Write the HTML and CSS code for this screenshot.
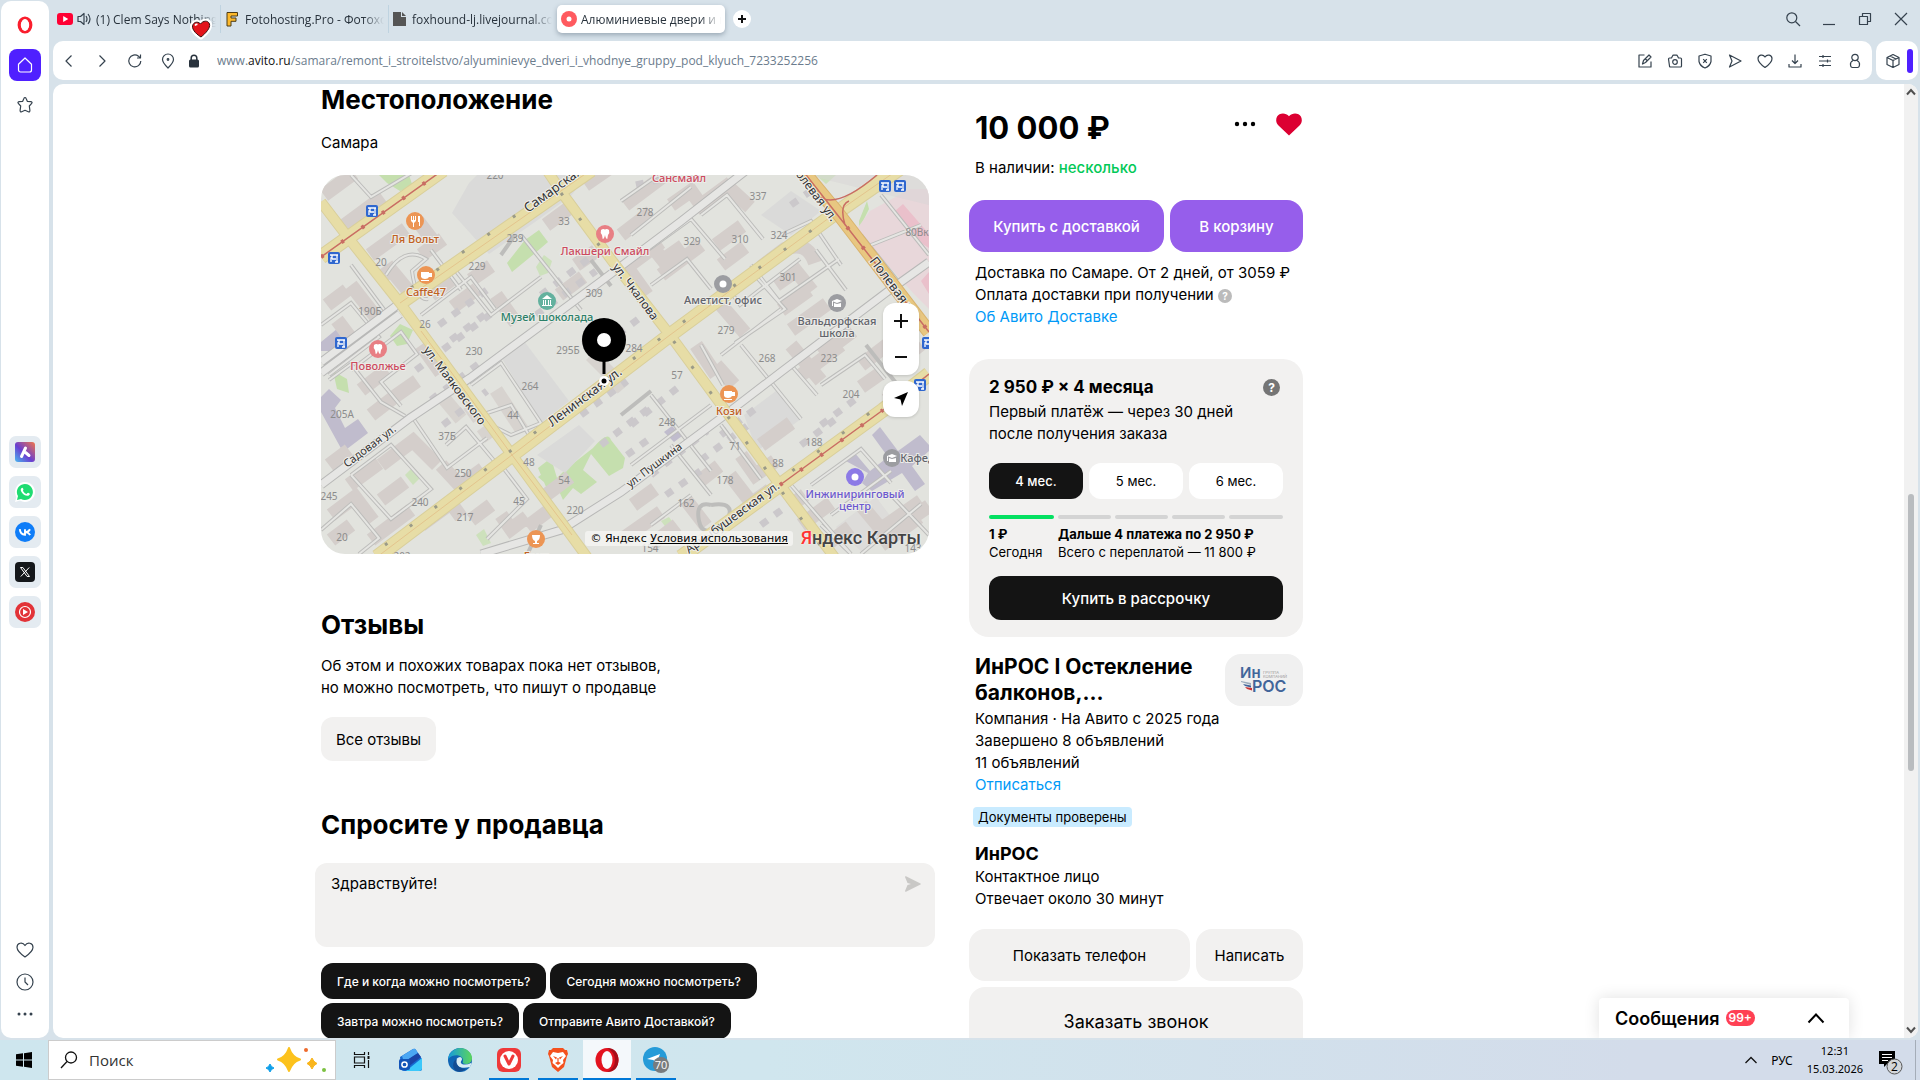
FILE: index.html
```html
<!DOCTYPE html>
<html lang="ru">
<head>
<meta charset="utf-8">
<title>Алюминиевые двери и входные группы</title>
<link rel="stylesheet" href="styles.css">
</head>
<body>
<div class="browser">
  <nav class="sidebar" aria-label="Боковая панель">
    <button class="side-btn opera" aria-label="Opera"><svg width="18" height="18" viewBox="0 0 18 18"><ellipse cx="9" cy="9" rx="5.8" ry="7" fill="none" stroke="#fa1e2d" stroke-width="3.2"/><ellipse cx="9" cy="9" rx="3.8" ry="6" fill="#fff"/></svg></button>
    <button class="side-btn home" aria-label="Главная"><svg class="ic" width="18" height="18" viewBox="0 0 18 18"><path d="M2.5 8.2 9 2l6.500 6.200V14a2 2 0 0 1-2 2h-9a2 2 0 0 1-2-2z"/></svg></button>
    <button class="side-btn star" aria-label="Закладки"><svg class="ic" width="18" height="18" viewBox="0 0 18 18"><path d="M9 1.500q.7 0 1 .8l1.300 3 3.600.4q2 .4.6 1.900l-2.200 2.400.6 4.400q.1 2-1.600 1.300L9 14.300l-3.300 1.400q-1.700.7-1.600-1.300l.6-4.400-2.200-2.400q-1.400-1.500.6-1.900l3.600-.4 1.300-3q.3-.8 1-.8z"/></svg></button>
    <div class="apps">
      <button class="app" aria-label="Aria"><svg width="20" height="20" viewBox="0 0 20 20"><defs><linearGradient id="ar" x1="0" y1="1" x2="1" y2="0"><stop offset="0" stop-color="#48b8f0"/><stop offset=".45" stop-color="#6a3fd0"/><stop offset="1" stop-color="#f2764a"/></linearGradient></defs><rect width="20" height="20" rx="3" fill="url(#ar)"/><path d="M6.500 14.500 10.500 6M10.500 10.500l3.500 3" stroke="#fff" stroke-width="3" stroke-linecap="round"/></svg></button>
      <button class="app" aria-label="WhatsApp"><svg width="20" height="20" viewBox="0 0 20 20"><path d="M0 20 1.400 15A10 10 0 1 1 5 18.600z" fill="#fff"/><path d="M2 18l1-3.900A8 8 0 1 1 6 17z" fill="#1fdc72"/><path d="M6.200 6.500q1.200-1.700 2 .2c.8 1.400-.8 1.500 0 2.600q1.300 2 3 2.600c.9.300 1.200-1.700 2.400-.9 2.100 1 1.300 1.500.2 2.400-1.800 1.200-5.200-.3-6.800-2.600-1.200-1.600-1.700-3.300-.8-4.300z" fill="#fff"/></svg></button>
      <button class="app" aria-label="ВКонтакте"><svg width="20" height="20" viewBox="0 0 20 20"><circle cx="10" cy="10" r="10" fill="#0f7df8"/><path d="M4.800 7.200q.5 5.300 5.200 5.600V7.200M15 7.200q-1.500 2.800-4.600 2.900 3.200.2 4.800 2.800" fill="none" stroke="#fff" stroke-width="1.900"/></svg></button>
      <button class="app" aria-label="X"><svg width="20" height="20" viewBox="0 0 20 20"><rect width="20" height="20" rx="4" fill="#14171a"/><path d="M5.500 5.500h2.400l6.600 9h-2.400zM14.200 5.500l-8.400 9" fill="none" stroke="#fff" stroke-width="1"/></svg></button>
      <button class="app" aria-label="YouTube Music"><svg width="20" height="20" viewBox="0 0 20 20"><circle cx="10" cy="10" r="10" fill="#e23338"/><circle cx="10" cy="10" r="5.500" fill="none" stroke="#fff" stroke-width="1.200"/><path d="M8 7v6l5-3z" fill="#fff"/></svg></button>
    </div>
    <div class="side-bottom">
      <button class="side-btn" aria-label="Избранное"><svg class="ic" width="18" height="18" viewBox="0 0 18 18"><path d="M9 16Q1 10.500 1 6.300C1 2 6.500.5 9 4.500 11.500.5 17 2 17 6.300 17 10.500 9 16 9 16z"/></svg></button>
      <button class="side-btn" aria-label="История"><svg class="ic" width="18" height="18" viewBox="0 0 18 18"><circle cx="9" cy="9" r="8"/><path d="M9 4.500V9l3 3"/></svg></button>
      <button class="side-btn" aria-label="Ещё"><svg width="18" height="18" viewBox="0 0 18 18" fill="#35424e"><circle cx="3" cy="9" r="1.500"/><circle cx="9" cy="9" r="1.500"/><circle cx="15" cy="9" r="1.500"/></svg></button>
    </div>
  </nav>

  <div class="window">
    <header class="tabs">
      <div class="tab"><svg width="16" height="12" viewBox="0 0 16 12"><rect width="16" height="12" rx="3" fill="#ff0033"/><path d="M6.200 3v6l5-3z" fill="#fff"/></svg><svg class="ic" width="15" height="14" viewBox="0 0 15 14"><path d="M1 4.500h2.500L7 1.500v11L3.500 9.500H1zM9 4q2 3 0 6M11 2q4 5 0 10"/></svg><span class="tab-text">(1) Clem Says Nothing</span><svg class="sticker" width="24" height="22" viewBox="0 0 24 22"><path d="M12 19C6 15.500 2 10 4 6.500 6 3 10 4 11.500 6 14 2.500 19 2 20.500 6 21.500 10 17 15 12 19z" fill="#e3141b" stroke="#fff" stroke-width="5" stroke-linejoin="round"/><path d="M12 19C6 15.500 2 10 4 6.500 6 3 10 4 11.500 6 14 2.500 19 2 20.500 6 21.500 10 17 15 12 19z" fill="#e3141b" stroke="#3a1010" stroke-width="1"/><path d="M6 7.500q1-1.500 2.500-1" stroke="#fff" stroke-width="1.500" fill="none"/></svg></div>
      <div class="tab"><svg width="14" height="16" viewBox="0 0 14 16"><path d="M2 1.500h10.500v3.500H6v2h5v3.300H6v4.700H2z" fill="#fdb92c" stroke="#4d3c17" stroke-width="1"/></svg><span class="tab-text">Fotohosting.Pro - Фотохост</span></div>
      <div class="tab"><svg width="13" height="14" viewBox="0 0 13 14"><path d="M0 0h8v5h5v9H0zM9 0l4 4H9z" fill="#555"/></svg><span class="tab-text">foxhound-lj.livejournal.com</span></div>
      <div class="tab active"><svg width="16" height="16" viewBox="0 0 16 16"><circle cx="8" cy="8" r="8" fill="#ff5a5f"/><circle cx="8" cy="8" r="2.500" fill="#fff"/></svg><span class="tab-text">Алюминиевые двери и вх</span></div>
      <button class="plus" aria-label="Новая вкладка"><svg width="18" height="18" viewBox="0 0 18 18"><path d="M9 5v8M5 9h8" stroke="#111" stroke-width="2"/></svg></button>
      <div class="win-controls">
        <button aria-label="Поиск вкладок"><svg class="ic" width="16" height="16" viewBox="0 0 16 16"><circle cx="6.800" cy="6.800" r="5"/><path d="m10.500 10.500 4.500 4.500"/></svg></button>
        <button aria-label="Свернуть"><svg class="ic" width="16" height="16" viewBox="0 0 16 16"><path d="M2 13.500h12"/></svg></button>
        <button aria-label="Восстановить"><svg class="ic" width="16" height="16" viewBox="0 0 16 16"><path d="M2.500 5.500h8v8h-8zM5.500 5.500v-3h8v8h-3"/></svg></button>
        <button aria-label="Закрыть"><svg class="ic" width="16" height="16" viewBox="0 0 16 16"><path d="m2 2 12 12M14 2 2 14"/></svg></button>
      </div>
    </header>

    <div class="toolbar">
      <div class="address">
        <button aria-label="Назад"><svg class="ic" width="16" height="16" viewBox="0 0 16 16"><path d="M10.500 2.500 5 8l5.500 5.500"/></svg></button>
        <button aria-label="Вперёд"><svg class="ic" width="16" height="16" viewBox="0 0 16 16"><path d="M5.500 2.500 11 8l-5.500 5.500"/></svg></button>
        <button aria-label="Обновить"><svg class="ic" width="16" height="16" viewBox="0 0 16 16"><path d="M13.800 8A6 6 0 1 1 11.500 3.200L13 4.800M13.500 1.500V5H10"/></svg></button>
        <button aria-label="Местоположение"><svg class="ic" width="16" height="16" viewBox="0 0 16 16"><path d="M8 15Q2.500 9.500 2.500 6.500a5.500 5.500 0 0 1 11 0Q13.500 9.500 8 15z"/><circle cx="8" cy="6.500" r=".8"/></svg></button>
        <svg class="lock" width="12" height="14" viewBox="0 0 12 14"><path d="M3.200 7V4a2.800 2.800 0 0 1 5.600 0v3" fill="none" stroke="#28323c" stroke-width="1.500"/><rect x="1" y="5.500" width="10" height="8" rx="1.500" fill="#28323c"/></svg>
        <span class="url">www.<b>avito.ru</b>/samara/remont_i_stroitelstvo/alyuminievye_dveri_i_vhodnye_gruppy_pod_klyuch_7233252256</span>
        <div class="tools">
          <button aria-label="Заметка"><svg class="ic" width="16" height="16" viewBox="0 0 16 16"><path d="M7.500 2H2v12h12V8.500M5.500 11l1-3.500L12 2l2 2-5.500 5.500zM8.500 6l2 2"/></svg></button>
          <button aria-label="Снимок"><svg class="ic" width="16" height="16" viewBox="0 0 16 16"><path d="M1.500 6q0-1 1-1h2l1-2q.3-.8 1-.8h3q.7 0 1 .8l1 2h2q1 0 1 1v7q0 1-1 1h-10q-1 0-1-1z"/><circle cx="8" cy="9" r="2.300"/></svg></button>
          <button aria-label="Защита"><svg class="ic" width="16" height="16" viewBox="0 0 16 16"><path d="M8 1.200 14 3v5.500Q13 13 8 15 3 13 2 8.500V3zM6.200 6.200l3.600 3.600M9.800 6.200 6.200 9.800"/></svg></button>
          <button aria-label="Отправить"><svg class="ic" width="16" height="16" viewBox="0 0 16 16"><path d="M2.500 2 14 8 2.500 14 5 8z"/></svg></button>
          <button aria-label="В избранное"><svg class="ic" width="16" height="16" viewBox="0 0 16 16"><path d="M8 14.500Q1 9.500 1 5.700C1 1.800 6 .8 8 4c2-3.200 7-2.200 7 1.700 0 3.800-7 8.800-7 8.800z"/></svg></button>
          <button aria-label="Загрузки"><svg class="ic" width="16" height="16" viewBox="0 0 16 16"><path d="M8 1.500v9M5 7.500l3 3 3-3M2 11v3h12v-3"/></svg></button>
          <button aria-label="Настройки"><svg class="ic" width="16" height="16" viewBox="0 0 16 16"><path d="M2 3.500h12M2 8h12M2 12.500h12M6 2v3M10.500 6.500v3M6 11v3"/></svg></button>
          <button aria-label="Профиль"><svg class="ic" width="16" height="16" viewBox="0 0 16 16"><circle cx="8" cy="4.500" r="3.200"/><path d="M6 7.500Q3 9 3.500 12q.2 2.500 2 2.500h5q1.800 0 2-2.500.5-3-2.500-4.500"/></svg></button>
        </div>
      </div>
      <div class="ext">
        <button aria-label="Расширения"><svg class="ic" width="16" height="16" viewBox="0 0 16 16"><path d="m8 1.500 6 3v7l-6 3-6-3v-7zM2 4.500l6 3 6-3M8 7.500v7M5 3l6 3"/></svg></button>
        <span class="ext-bar"></span>
      </div>
    </div>

    <div class="page">
      <main class="content">
        <section class="left">
          <h2 class="h-top">Местоположение</h2>
          <p class="city">Самара</p>
          <div class="map">
            <svg class="map-art" viewBox="0 0 608 379" preserveAspectRatio="xMidYMid slice">
              <rect width="608" height="379" fill="#e2e3de"/>
              <!-- parks and large plots -->
              <g fill="#c5dfae">
                <path d="M186 88l18-23 14-10 9 12-14 12-22 18zM58 0l30 0 4 12-13 4-13-8zM69 161l10-12 13 6-6 14-10 2zM12 196l14 8 2 14-12-4zM217 293l13-10 6 20 8-8 28-22q15-18 18-8l14 18-2 10-14 8-18-22-8 16 14 12-16 12-8-6-10 12-8-18-6 12zM538 54l10-20-2-8-8 20zM217 302l8-6 12 10-6 8z"/>
                <path d="M215 92l8-12 8 6-4 12-8 3zM84 300l8-8 8 10-8 8zM155 360l8-6 7 14-8 3zM340 346l8-4 14 20-12-3zM495 0h20l-10 9z" opacity=".7"/>
              </g>
              <path d="M131 38 148 8l8-8h110l-16 21-36 26-46 32zM180 182l23-16 45 60-28 22zM423 240l32-24 25 28-44 32zM440 40l30-24 30 20-30 24zM216 280l42-30 16 16-30 32z" fill="#dadad9"/>
              <path d="M535 55l14-19 40-22 19 0v120l-14-14-40-44z" fill="#e8d7da"/>
              <path d="M574 36l8-7 26 30v14l-8-5zM600 106l8-9v22z" fill="#eac0cb"/>
              <g fill="#c0bccd">
                <path d="M0 222l8-8 12 11-6 8 10 20 13-9 10 14-25 19-22-40zM0 167l22-18 8 12-20 15H0zM523 285l10-8 16 19 18-14-16-22 8-8 18 24 22-16 9 10v6l-17 15 13 18-10 7-13-18-30 18-10-8 6-10z"/>
                <path d="M343 257l8-6 10 10-8 6z"/>
              </g>
              <path d="M486 0h122v30M515 352l40-30 18 24-30 33" fill="#d8d6d6" opacity=".5"/>
              <!-- buildings along the blocks -->
              <g fill="none" stroke="#d4cecb" stroke-width="14">
                <path d="M3 20l30-22M20 53l42-31M49 80l36-26M56 105l14-10 20 24M100 80l22-16M96 45l20 26M30 110l28 36M6 130l20-15M16 145l24 32M40 215l26-20M50 240l26-20 20-14M100 170l20 28M132 132l24-18M150 105l20-14M110 120l20-15M175 120l20 28M225 50l30-22M255 90l20-14M238 120l24-18M264 10l26-18M300 60l30-23M304 30l40-30M330 70l12 15 20-14M350 30l20-14 10 14 30-22M395 70l26-19M405 10l24 22M400 90l24-18M326 120l-20-28 34-25M340 100l40-30M375 170l20 30M395 190l18 20M400 130l24 28M440 92l24-18q22-9 30 14M455 110l20-14 16 20M460 135l28-20M470 155l36-26M470 170l30 36M480 200l40-30M500 180l32-24M540 190l26-20M580 185l20-16M420 280l14 20 20-14M440 270l30-22M540 212l20-14M565 225l16-12"/>
                <path d="M8 290l20-15M28 310l30-22M60 290l32-24 24 24M10 340l24-18 18 24M30 350l-20 15M50 365l40-30M60 325l24-18M120 290l24 26M140 310l22-16M100 350l30-22 10 14M150 345l20-15M180 340l10 14 16-12M206 352l24-18M225 320l24-18M300 365l40-28M312 330l22-16M330 370l26-20M365 325l20 26M380 305l18-14M409 300l20 26M435 325l14-10M480 350l30-22M505 370l24-18M540 330l20 24 40-28M560 370l38-28M595 340l13-9M470 330l14-10"/>
                <path d="M120 220l20 24M148 230l10 14M160 262l14-10M175 215l26 40M270 180l24 24M264 172l20-14M290 200l12 14" opacity=".8"/>
              </g>
              <g fill="none" stroke="#cbc8cb" stroke-width="7" stroke-dasharray="8 9">
                <path d="M118 150l52-38M130 165l40-30M95 195l80-60M270 180l50-38M110 225l50-38M122 250l44-34M260 240l46-34M280 270l52-40M310 250l50-40M380 285l46-34M330 300l56-44M400 260l34-26M220 120l50-38M215 140l60-44M306 280l22-16M345 320l40-28M480 270l40-30M500 250l40-30M375 140l40-32M440 350l30-22M315 10l60-14M470 30l28-20"/>
              </g>
              <!-- yards and lanes -->
              <g fill="none" stroke="#bdbdbb" stroke-width="4"><path id="lanes" d="M30 0l20 22 44-26M30 90l40 54M65 100q18-30 40-16l-14 12q4 30 16 28M0 150l30-22 28 34-50 38M8 205l22-16 30 38 24 14M30 195l50-38 16 22-36 28 20 24M100 140l50-38 24 32M130 90l40 50 50-38M110 75l30 40M150 210l30-22 40 60-30 12-20-10M180 80l14-20M200 60l60 75M270 85l20 26M160 240l30-10 18 30M0 355l30-26 28 34-20 16M30 300l40-30 40 44-40 30-40-44M92 243l34 50 40-30M140 320l40-30 26 34-40 40M206 380l14-30M125 270l20-18 30 36M310 60l60-48M320 80l50-36 34 40M300 26l40-28M380 40l26-20 36 44M330 110l36-26 24 30M370 140l60-44 34 38-50 34M400 180l60-46M430 90l28 36 60-42M460 60l30-14 30 44M495 75l30 40M420 170l60 74M380 170l22 40M405 110l14 20 60-46M470 190l26 30M500 210l44-30 20 24M545 170l30 38M300 240l30-24M310 290l80-60M330 220l60 76M350 270l40 50M400 250l40 54M390 330q-16-4-12 16t28 0q10-20-16-16M330 350l40-30M480 290l50-36M490 310l50-36 30 34M510 340l60-44M500 350l30 29M540 379l60-50M570 320l38 40M470 310l60 69M540 60l40 50M560 20l48 60M600 50l-50 20"/></g>
              <g fill="none" stroke="#e5e5e2" stroke-width="2"><path d="M30 0l20 22 44-26M30 90l40 54M0 150l30-22 28 34-50 38M30 195l50-38 16 22-36 28 20 24M100 140l50-38 24 32M130 90l40 50 50-38M150 210l30-22 40 60-30 12-20-10M200 60l60 75M0 355l30-26 28 34-20 16M30 300l40-30 40 44-40 30-40-44M92 243l34 50 40-30M140 320l40-30 26 34-40 40M310 60l60-48M320 80l50-36 34 40M380 40l26-20 36 44M330 110l36-26 24 30M370 140l60-44 34 38-50 34M400 180l60-46M430 90l28 36 60-42M420 170l60 74M500 210l44-30 20 24M330 220l60 76M400 250l40 54M490 310l50-36 30 34M510 340l60-44M540 379l60-50M65 100q18-30 40-16l-14 12q4 30 16 28M8 205l22-16 30 38 24 14M110 75l30 40M160 240l30-10 18 30M125 270l20-18 30 36M300 26l40-28M460 60l30-14 30 44M495 75l30 40M380 170l22 40M405 110l14 20 60-46M470 190l26 30M310 290l80-60M350 270l40 50M330 350l40-30M480 290l50-36M500 350l30 29M570 320l38 40M470 310l60 69M540 60l40 50M560 20l48 60M600 50l-50 20"/></g>
              <g fill="none" stroke="#b8b8b7" stroke-width="9"><path d="M0 187l79-59M0 198l79-59M0 310l89-67 60-40 130-96 40-30 40-30 90-70M160 379l80-24 60-38 100-74 60-46 106-80 42-30"/></g>
              <g fill="none" stroke="#e6e6e4" stroke-width="7"><path d="M0 187l79-59M0 198l79-59M0 310l89-67 60-40 130-96 40-30 40-30 90-70M160 379l80-24 60-38 100-74 60-46 106-80 42-30"/></g>
              <!-- main streets -->
              <g fill="none" stroke="#d9cf9b">
                <path d="M0 82 122-5M79 128 270-5M56 382l135-102 158-120 163-120 66-46M360 382l99-72 103-75 46-36" stroke-width="15"/>
                <path d="M0 27l29 38 50 63 112 152 75 102M227-3l17 25 48 65 57 73 110 150 55 73" stroke-width="11"/>
              </g>
              <g fill="none" stroke="#e7dda6">
                <path d="M0 82 122-5M79 128 270-5M56 382l135-102 158-120 163-120 66-46M360 382l99-72 103-75 46-36" stroke-width="13"/>
                <path d="M0 27l29 38 50 63 112 152 75 102M227-3l17 25 48 65 57 73 110 150 55 73" stroke-width="9"/>
              </g>
              <path d="M56 382l135-102 158-120 163-120 66-46M79 128 270-5M100 156l91 124 60 80" fill="none" stroke="#e3c48d" stroke-width="1"/>
              <path d="M482-4l34 41 92 120" fill="none" stroke="#d9b46e" stroke-width="14"/><path d="M482-4l34 41 92 120" fill="none" stroke="#e8c781" stroke-width="12"/>
              <g fill="none" stroke="#c96d63" stroke-width="1.500"><path d="M0 82 122-5M482-4l44 56 82 105M459 310l103-75 46-36M496 20q18 16 60-20M524 50q-6-20 4-24"/><path d="M0 82 122-5M526 52l82 105M459 310l103-75" stroke-width="4" stroke-dasharray="3 22"/></g>
              <g fill="none" stroke="#9b9b88" stroke-width="3" stroke-dasharray="3 28"><path d="M64 370l120-90 160-120 168-120M90 113l170-118M240 18l54 74 60 76 105 146 50 70M372 370l190-142"/></g>

              <!-- house numbers -->
              <g class="map-num">
                <text x="174" y="4">220</text><text x="60" y="91">20</text><text x="194" y="67">239</text><text x="156" y="95">229</text><text x="243" y="50">33</text><text x="49" y="140">190Б</text><text x="104" y="153">26</text><text x="153" y="180">230</text><text x="273" y="122">309</text><text x="247" y="179">295Б</text><text x="313" y="177">284</text><text x="209" y="215">264</text><text x="21" y="243">205А</text><text x="192" y="244">44</text><text x="126" y="265">37Б</text><text x="142" y="302">250</text><text x="208" y="291">48</text><text x="243" y="309">54</text><text x="8" y="325">245</text><text x="99" y="331">240</text><text x="198" y="330">45</text><text x="254" y="339">220</text><text x="144" y="346">217</text><text x="21" y="366">20</text><text x="81" y="385">202</text>
                <text x="324" y="41">278</text><text x="437" y="25">337</text><text x="371" y="70">329</text><text x="419" y="68">310</text><text x="458" y="64">324</text><text x="467" y="106">301</text><text x="596" y="61">80Вк</text><text x="405" y="159">279</text><text x="446" y="187">268</text><text x="508" y="187">223</text><text x="356" y="204">57</text><text x="530" y="223">204</text><text x="346" y="251">248</text><text x="414" y="275">71</text><text x="493" y="271">188</text><text x="457" y="292">88</text><text x="404" y="309">178</text><text x="365" y="332">162</text><text x="329" y="377">154</text><text x="592" y="377">143</text>
              </g>
              <!-- street names -->
              <g class="map-street">
                <text transform="translate(207 38) rotate(-36)">Самарская ул.</text>
                <text class="md" transform="translate(102 175) rotate(53)">ул. Маяковского</text>
                <text class="md" transform="translate(291 92) rotate(53)">ул. Чкалова</text>
                <text transform="translate(231 252) rotate(-37)">Ленинская ул.</text>
                <text class="sm" transform="translate(26 293) rotate(-37)">Садовая ул.</text>
                <text class="sm" transform="translate(309 313) rotate(-37)">ул. Пушкина</text>
                <text class="md" transform="translate(368 379) rotate(-36)">Арцыбушевская ул.</text>
                <text class="md" transform="translate(469-8) rotate(53)">Полевая ул.</text>
                <text transform="translate(548 86) rotate(53)">Полевая ул.</text>
              </g>
              <!-- tram stops -->
              <g fill="#2f67cf"><rect x="45" y="30" width="12" height="12" rx="2"/><rect x="7" y="77" width="12" height="12" rx="2"/><rect x="14" y="162" width="12" height="12" rx="2"/><rect x="558" y="5" width="12" height="12" rx="2"/><rect x="573" y="5" width="12" height="12" rx="2"/><rect x="601" y="162" width="12" height="12" rx="2"/><rect x="593" y="204" width="12" height="12" rx="2"/></g>
              <g fill="none" stroke="#fff" stroke-width="1.300"><path id="tram" d="M47 33h8M49 33v3h-1v4M49 37h4M54 33v7M52 40h3"/><use href="#tram" x="-38" y="47"/><use href="#tram" x="-31" y="132"/><use href="#tram" x="513" y="-25"/><use href="#tram" x="528" y="-25"/><use href="#tram" x="556" y="132"/><use href="#tram" x="548" y="174"/></g>
              <!-- places -->
              <g fill="#ec9554"><circle cx="94" cy="46" r="9"/><circle cx="105" cy="100" r="9"/><circle cx="215" cy="364" r="9"/><circle cx="408" cy="219" r="9"/></g>
              <g fill="#e87f84"><circle cx="284" cy="59" r="9"/><circle cx="57" cy="174" r="9"/></g>
              <circle cx="226" cy="126" r="9" fill="#63b19e"/>
              <g fill="#9c9da1"><circle cx="402" cy="109" r="9"/><circle cx="516" cy="128" r="9"/><circle cx="571" cy="283" r="9"/></g>
              <circle cx="534" cy="302" r="9" fill="#8c7ae6"/>
              <g fill="#fff"><circle cx="402" cy="109" r="3.500"/><circle cx="534" cy="302" r="3.500"/><path id="tooth" d="M280 55q2-1.500 4-.5 2-1 4 .5 1 3-1 5l-.7 4q-1.500 0-2.300-4-.8 4-2.300 4l-.7-4q-2-2-1-5z"/><use href="#tooth" x="-227" y="115"/><path id="cup" d="M100 97h8v5q-1 2-4 2t-4-2zM100 105h8v1h-8zM108 98h3v4h-3z"/><use href="#cup" x="303" y="119"/><path d="M211 360h8q0 5-3 6v2h2v1h-6v-1h2v-2q-3-1-3-6zM90 41h1v4h1v-4h1v4h1v-4h1v5l-2 2v4h-1v-4l-2-2zM97 41h2v10h-1v-4h-1zM221 124l5-4 5 4zM222 125h1v5h-1zM224 125h1v5h-1zM227 125h1v5h-1zM229 125h1v5h-1zM221 130h10v1h-10z"/><path id="cap" d="M511 126l5-2 5 2-5 2zM513 128l3 1 4-1v4h-7zM511 126h1v5h-1z"/><use href="#cap" x="55" y="155"/></g>
              <g class="map-place">
                <g fill="#c06022"><text x="94" y="68">Ля Вольт</text><text x="105" y="121">Caffe47</text><text x="215" y="385">Грит</text><text x="408" y="240">Кози</text></g>
                <g fill="#cc4a5e"><text x="284" y="80">Лакшери Смайл</text><text x="57" y="195">Поволжье</text><text x="358" y="7">Сансмайл</text></g>
                <text x="226" y="146" fill="#2b8069">Музей шоколада</text>
                <g fill="#62646c"><text x="402" y="129">Аметист, офис</text><text x="516" y="150">Вальдорфская</text><text x="516" y="162">школа</text><text x="603" y="287">Кафедра</text></g>
                <g fill="#6b58cf"><text x="534" y="323">Инжиниринговый</text><text x="534" y="335">центр</text></g>
              </g>
              <!-- item pin -->
              <circle cx="283" cy="206" r="5" fill="#fff"/><circle cx="283" cy="206" r="2.500"/><circle cx="283" cy="165" r="22"/><path d="M281.500 185h3v14h-3z"/><circle cx="283" cy="165" r="7" fill="#fff"/>
            </svg>
            <div class="map-controls">
              <div class="zoom"><button aria-label="Приблизить"><svg width="16" height="16" viewBox="0 0 16 16"><path d="M8 1v14M1 8h14" stroke="#111" stroke-width="2"/></svg></button><button aria-label="Отдалить"><svg width="16" height="16" viewBox="0 0 16 16"><path d="M2 8h12" stroke="#111" stroke-width="2"/></svg></button></div>
              <button class="locate" aria-label="Моё местоположение"><svg width="16" height="16" viewBox="0 0 16 16"><path d="M15 1 9 15 7.500 8.500 1 7z"/></svg></button>
            </div>
            <div class="map-foot"><span class="copy">© Яндекс <a href="#terms">Условия использования</a></span><span class="ya"><i>Я</i>ндекс Карты</span></div>
          </div>

          <h2 class="h-reviews">Отзывы</h2>
          <p class="text">Об этом и похожих товарах пока нет отзывов,<br>но можно посмотреть, что пишут о продавце</p>
          <button class="btn-soft all">Все отзывы</button>

          <h2 class="h-ask">Спросите у продавца</h2>
          <div class="ask"><textarea aria-label="Сообщение продавцу">Здравствуйте!</textarea><button aria-label="Отправить"><svg width="16" height="16" viewBox="0 0 16 16"><path d="M0 1q0-1 1-.7L15.500 7.500q.7.500 0 1L1 15.700q-1 .3-1-.7L2.500 9 6 8 2.500 7z" fill="#c9c8c6"/></svg></button></div>
          <div class="chips"><button>Где и когда можно посмотреть?</button><button>Сегодня можно посмотреть?</button><button>Завтра можно посмотреть?</button><button>Отправите Авито Доставкой?</button></div>
        </section>

        <aside class="right">
          <div class="price-row"><span class="price">10 000 ₽</span><button aria-label="Ещё"><svg width="22" height="8" viewBox="0 0 22 8"><circle cx="3" cy="4" r="2.200"/><circle cx="11" cy="4" r="2.200"/><circle cx="19" cy="4" r="2.200"/></svg></button><button aria-label="В избранном"><svg width="26" height="23" viewBox="0 0 26 23"><path d="M13 22.500 2.500 12.500C-1.500 8.500.2 3 3.500 1.300 6.500-.3 10.500.3 13 3.300c2.500-3 6.500-3.600 9.500-2C25.800 3 27.500 8.500 23.500 12.500z" fill="#dc0032"/></svg></button></div>
          <p class="stock">В наличии: <span>несколько</span></p>
          <div class="buy"><button>Купить с доставкой</button><button>В корзину</button></div>
          <p class="text pad">Доставка по Самаре. От 2 дней, от 3059 ₽<br>Оплата доставки при получении <span class="q small">?</span><br><a href="#delivery">Об Авито Доставке</a></p>

          <section class="loan">
            <div class="loan-head"><h3>2 950 ₽ × 4 месяца</h3><button class="q" aria-label="Подробнее">?</button></div>
            <p class="text">Первый платёж — через 30 дней<br>после получения заказа</p>
            <div class="terms"><button class="on">4 мес.</button><button>5 мес.</button><button>6 мес.</button></div>
            <div class="bars"><i class="paid"></i><i></i><i></i><i></i><i></i></div>
            <div class="plan"><p><b>1 ₽</b><br>Сегодня</p><p><b>Дальше 4 платежа по 2 950 ₽</b><br>Всего с переплатой — 11 800 ₽</p></div>
            <button class="loan-buy">Купить в рассрочку</button>
          </section>

          <section class="seller">
            <div><h3>ИнРОС I Остекление балконов,…</h3></div>
            <div class="logo"><svg width="48" height="28" viewBox="0 0 48 28"><g font-family="Inter, sans-serif" font-weight="600" fill="#41659a"><text x="0" y="12" font-size="15">Ин</text><text x="12" y="26" font-size="16">РОС</text></g><g font-family="Inter, sans-serif" font-size="4" fill="#999"><text x="23" y="8">ГРУППА</text><text x="23" y="12">КОМПАНИЙ</text></g><path d="M1 15l10 2v2L1 16z" fill="#9ab"/><path d="M3 18l8 1.500v2L5 20z" fill="#41659a"/><path d="M5 21l7 1v2.500L7 23z" fill="#c33"/></svg></div>
          </section>
          <p class="text pad">Компания · На Авито с 2025 года<br>Завершено 8 объявлений<br>11 объявлений<br><a href="#unsubscribe">Отписаться</a></p>
          <span class="badge">Документы проверены</span>
          <h4>ИнРОС</h4>
          <p class="text pad">Контактное лицо<br>Отвечает около 30 минут</p>
          <div class="contact"><button class="btn-soft">Показать телефон</button><button class="btn-soft">Написать</button></div>
          <button class="btn-soft call">Заказать звонок</button>
        </aside>
      </main>

      <div class="scrollbar"><svg width="10" height="8" viewBox="0 0 10 8"><path d="M1 6.500 5 2l4 4.500" fill="none" stroke="#505050" stroke-width="2"/></svg><span class="thumb"></span><svg width="10" height="8" viewBox="0 0 10 8"><path d="M1 1.500 5 6l4-4.500" fill="none" stroke="#505050" stroke-width="2"/></svg></div>
      <button class="messages"><span>Сообщения</span><em>99+</em><svg width="18" height="12" viewBox="0 0 18 12"><path d="m1.500 10.500 7.500-8 7.500 8" fill="none" stroke="#000" stroke-width="2"/></svg></button>
    </div>
  </div>
</div>

<footer class="taskbar">
  <button class="start" aria-label="Пуск"><svg width="16" height="16" viewBox="0 0 16 16"><path d="M0 2.300 7 1.300v6.200H0zM8 1.200 16 0v7.500H8zM0 8.500h7v6.200l-7-1zM8 8.500h8V16l-8-1.200z"/></svg></button>
  <label class="search"><svg width="18" height="18" viewBox="0 0 18 18" fill="none" stroke="#111" stroke-width="1.300"><circle cx="11" cy="6.500" r="5.500"/><path d="M7 10.500 1 17"/></svg><input type="text" value="Поиск" aria-label="Поиск"><svg width="62" height="26" viewBox="0 0 62 26"><path d="M24 1q3 9 11 11.500-8 2.500-11 11.500-3-9-11-11.500Q21 10 24 1z" fill="#fcc21d" stroke="#fcc21d" stroke-width="2" stroke-linejoin="round"/><path d="M47 11q1.500 4 5 5.500-3.500 1.500-5 5.500-1.500-4-5-5.500 3.500-1.500 5-5.500z" fill="#f9b51c" stroke="#f9b51c" stroke-linejoin="round"/><path d="M5 17q1 3 4 4-3 1-4 4-1-3-4-4 3-1 4-4z" fill="#10a0ea" stroke="#10a0ea" stroke-linejoin="round"/><circle cx="41" cy="3" r="2" fill="#ee6a2c"/><circle cx="59" cy="23" r="2" fill="#7cc142"/></svg></label>
  <div class="tasks">
    <button aria-label="Представление задач"><svg width="18" height="18" viewBox="0 0 18 18" fill="none" stroke="#111" stroke-width="1.200"><path d="M1.500 1v2.500h10V1M1.500 6h10v6h-10zM1.500 17v-2.500h10V17M15.500 1v3M15.500 9v8"/><path d="M14.500 6.500h2" stroke-width="3"/></svg></button>
    <button aria-label="Outlook"><svg width="24" height="24" viewBox="0 0 24 24"><path d="m1 9 13-8q2-1 3 1l6 9v10q0 2-3 2H5q-3 0-3-3z" fill="#1769cf"/><path d="M3 8 14 1q2-1 3 1l2 3-14 9z" fill="#4ba7f3"/><path d="m5 14 14-9 3 4-13 10z" fill="#1b43a5"/><path d="m23 10-16 13h13q3 0 3-3z" fill="#3cc8fa"/><rect y="11" width="11" height="11" rx="2" fill="#1254b8"/><circle cx="5.500" cy="16.500" r="2.600" fill="none" stroke="#fff" stroke-width="1.500"/></svg></button>
    <button aria-label="Edge"><svg width="24" height="24" viewBox="0 0 24 24"><defs><linearGradient id="ed" x1="0" x2="1"><stop offset="0" stop-color="#169bdc"/><stop offset="1" stop-color="#5cd65c"/></linearGradient></defs><circle cx="12" cy="12" r="12" fill="#1065b4"/><path d="M0 11C1 4 7 0 12 0c7 0 12 5 12 10 0 4-3 6-6 6-3 0-4-1-3-3 1-5-8-9-15-2z" fill="url(#ed)"/><path d="M12 9q-5 1-4 6c1 4 6 6 14 4q2-4 1-4c-2 1-4 1.500-6 1.500-4 0-5-2-3.500-4 1-1.500.5-3-1.500-3.500z" fill="#d8edf5"/><path d="M9 11c-2 5 2 10 9 10q-5 4-10 2c-4-3-4-10 1-12z" fill="#124c93"/></svg></button>
    <button class="open" aria-label="Vivaldi"><svg width="24" height="24" viewBox="0 0 24 24"><rect width="24" height="24" rx="6" fill="#ef3939"/><circle cx="12" cy="12" r="9" fill="#fff"/><path d="m8 8 4 8 4-8" fill="none" stroke="#ef3939" stroke-width="3" stroke-linecap="round" stroke-linejoin="round"/></svg></button>
    <button class="open" aria-label="Brave"><svg width="22" height="24" viewBox="0 0 22 24"><path d="m6 0h10l2 2 2 0 1 4-1 2-3 11-6 5-6-5L2 8 1 6l1-4h2z" fill="#f4511e"/><path d="m6 4 5 1 5-1 3 4-3 4 .5 3-2.500 2-3 3-3-3-2.500-2L6 12 3 8z" fill="#fff"/><path d="m6 8 4 1.500-1 2zM16 8l-4 1.500 1 2zM10.400 10h1.200v4h-1.200zM8 15l3-1.500 3 1.500-3 2z" fill="#f4511e"/></svg></button>
    <button class="open current" aria-label="Opera"><svg width="24" height="24" viewBox="0 0 24 24"><ellipse cx="12" cy="12" rx="11.500" ry="12" fill="#e3131f"/><path d="M12 0q11 0 11.500 12Q23 24 12 24q8-4 8-12T12 0z" fill="#a70e19"/><ellipse cx="12" cy="12" rx="5.500" ry="9" fill="#fafcfd"/></svg></button>
    <button class="open" aria-label="Telegram"><svg width="26" height="26" viewBox="0 0 26 26"><circle cx="12" cy="12" r="12" fill="#259bd8"/><path d="m4 12 13-5-3 8-4-2z" fill="#fff"/><circle cx="18" cy="18" r="8" fill="#777b7e"/><text x="18" y="22" font-family="Open Sans, sans-serif" font-size="11" text-anchor="middle" fill="#fff">70</text></svg></button>
  </div>
  <div class="tray">
    <button aria-label="Скрытые значки"><svg width="12" height="8" viewBox="0 0 12 8"><path d="m.5 7 5.500-5.500L11.500 7" fill="none" stroke="#111" stroke-width="1.300"/></svg></button>
    <span>РУС</span>
    <time>12:31<br>15.03.2026</time>
    <button class="note" aria-label="Уведомления"><svg width="24" height="24" viewBox="0 0 24 24"><path d="M0 0h16v13H8l-3 3v-3H0z"/><path d="M3 3.500h10M3 6.500h10M3 9.500h6" stroke="#fff"/><circle cx="15.500" cy="15.500" r="7.500" fill="#d3d6da" stroke="#555" stroke-width="1"/><text x="15.500" y="20" font-family="Open Sans, sans-serif" font-size="12" text-anchor="middle">2</text></svg></button>
  </div>
</footer>
</body>
</html>
```
FILE: styles.css
```css
* { box-sizing: border-box; }
body { margin: 0; height: 100vh; display: flex; flex-direction: column; overflow: hidden; background: #d7e2ea; font-family: Inter, "Noto Sans", sans-serif; font-size: 15px; color: #000; }
button { border: 0; padding: 0; margin: 0; background: none; font: inherit; color: inherit; display: flex; align-items: center; justify-content: center; }
h2, h3, h4, p { margin: 0; }
a { color: #0099f7; text-decoration: none; }
svg { flex: none; display: block; }
.ic { fill: none; stroke: #35424e; stroke-width: 1.2; stroke-linejoin: round; }

.browser { flex: 1; min-height: 0; display: flex; gap: 4px; padding: 1px 2px 2px 1px; }
.sidebar { width: 48px; background: #fff; border-radius: 10px; display: flex; flex-direction: column; align-items: center; padding: 8px 0; position: relative; }
.side-btn { width: 32px; height: 32px; border-radius: 8px; }
.home { background: #4f20ff; margin-top: 8px; }
.home .ic { stroke: #fff; }
.star { margin-top: 8px; }
.apps { margin: auto 0; display: flex; flex-direction: column; gap: 8px; padding-top: 8px; }
.app { width: 32px; height: 32px; border-radius: 7px; background: #e4ebf1; }
.side-bottom { display: flex; flex-direction: column; }

.window { flex: 1; min-width: 0; display: flex; flex-direction: column; }
.tabs { height: 36px; display: flex; align-items: center; font: 12px "Open Sans", sans-serif; color: #28323c; margin-bottom: 4px; }
.tab { width: 168px; height: 28px; display: flex; align-items: center; gap: 4px; padding: 0 4px; border-right: 1px solid #bfd3e0; background-clip: padding-box; position: relative; }
.tab:nth-child(2) { gap: 6px; }
.tab:nth-child(3) { gap: 6px; border-color: transparent; }
.tab.active { background: #fff; border: 0; border-radius: 5px; box-shadow: 0 2px 5px rgba(60, 80, 100, .4); }
.tab-text { flex: 1; overflow: hidden; white-space: nowrap; mask-image: linear-gradient(90deg, #000 85%, transparent); }
.sticker { position: absolute; left: 136px; top: 13px; }
.plus { width: 18px; height: 18px; border-radius: 50%; background: #fff; margin-left: 8px; }
.win-controls { margin-left: auto; display: flex; gap: 20px; padding-right: 9px; }
.toolbar { height: 39px; display: flex; gap: 4px; margin-bottom: 4px; }
.address { flex: 1; min-width: 0; background: #fff; border-radius: 10px; display: flex; align-items: center; padding: 0 9px 0 8px; }
.address > button { margin-right: 17px; }
.lock { margin: 0 17px 0 -5px; }
.url { flex: 1; min-width: 0; overflow: hidden; white-space: nowrap; font: 12px "Open Sans", sans-serif; color: #6b7c8d; }
.url b { font-weight: 400; color: #111; }
.tools { display: flex; gap: 14px; }
.ext { width: 42px; background: #fff; border-radius: 10px; display: flex; align-items: center; padding-left: 9px; gap: 6px; }
.ext-bar { width: 6px; height: 24px; border-radius: 3px; background: #4f20ff; }

.page { flex: 1; min-height: 0; background: #fff; border-radius: 10px; overflow: hidden; display: flex; position: relative; }
.content { flex: 1; max-width: 1327px; margin: 0 auto; display: grid; grid-template-columns: 620px 334px; column-gap: 34px; align-items: start; }
.left { padding-left: 6px; }
h2 { font-size: 26px; line-height: 32px; font-weight: 700; }
.text { line-height: 22px; }
.pad { padding-left: 6px; }
.city { margin-top: 16px; line-height: 22px; }
.map { margin: 21px 6px 0 0; height: 379px; border-radius: 24px; overflow: hidden; position: relative; }
.map-art { width: 100%; height: 100%; font-family: "Noto Sans", sans-serif; }
.map-num { font-size: 10px; fill: #8c8c8c; text-anchor: middle; }
.map-street { font-size: 13px; fill: #333; paint-order: stroke; stroke: #eeeeea; stroke-width: 2px; }
.map-street .md { font-size: 12px; }
.map-street .sm { font-size: 11px; }
.map-place { font-size: 11px; font-weight: 500; text-anchor: middle; paint-order: stroke; stroke: #ecece8; stroke-width: 2px; }
.map-controls { position: absolute; right: 10px; top: 128px; display: grid; gap: 6px; }
.zoom, .locate { width: 36px; background: #fff; border-radius: 12px; box-shadow: 0 1px 3px rgba(0, 0, 0, .15); }
.zoom button, .locate { width: 36px; height: 36px; }
.map-foot { position: absolute; right: 8px; bottom: 4px; display: flex; align-items: center; gap: 8px; }
.copy { background: rgba(245, 245, 242, .85); border-radius: 3px; padding: 0 5px; font: 11px/15px "DejaVu Sans", sans-serif; }
.copy a { color: #000; text-decoration: underline; }
.ya { font: 500 18px/24px Roboto, sans-serif; color: #444; text-shadow: 0 0 2px #fff; }
.ya i { font-style: normal; color: #f33; }
.h-reviews { margin-top: 55px; }
.h-reviews + .text { margin-top: 14px; }
.btn-soft { background: #f2f1f0; border-radius: 12px; }
.all { width: 115px; height: 44px; margin-top: 18px; }
.h-ask { margin-top: 48px; }
.ask { margin: 22px 0 16px -6px; height: 84px; background: #f2f1f0; border-radius: 12px; display: flex; align-items: flex-start; padding: 10px 14px 10px 16px; }
.ask textarea { flex: 1; height: 60px; border: 0; padding: 0; background: none; resize: none; outline: 0; font: inherit; line-height: 22px; }
.ask button { margin-top: 3px; }
.chips { display: flex; flex-wrap: wrap; gap: 4px; padding-right: 140px; }
.chips button { height: 36px; padding: 0 16px; border-radius: 12px; background: #141414; color: #fff; font-size: 12px; font-weight: 500; white-space: nowrap; }

.price-row { display: flex; align-items: center; height: 48px; margin-top: 19px; padding: 0 1px 0 6px; gap: 20px; }
.price { flex: 1; font-size: 31px; font-weight: 700; }
.price-row button { margin-bottom: 6px; }
.stock { padding-left: 6px; margin-top: 6px; line-height: 22px; }
.stock span { color: #02c957; font-weight: 500; font-size: 15px; }
.buy { display: grid; grid-template-columns: 195fr 133fr; gap: 6px; margin: 21px 0 10px; }
.buy button { height: 52px; border-radius: 16px; background: #965eeb; color: #fff; font-weight: 500; }
.q { width: 17px; height: 17px; border-radius: 50%; background: #757575; color: #fff; font-size: 12px; font-weight: 700; }
.q.small { display: inline-block; width: 14px; height: 14px; background: #bbb; font-size: 10px; line-height: 14px; text-align: center; vertical-align: 0; }
.loan { margin-top: 31px; height: 278px; border-radius: 20px; background: #f2f1f0; padding: 16px 20px; }
.loan-head { display: flex; justify-content: space-between; align-items: center; padding-right: 3px; }
h3 { font-size: 17px; line-height: 24px; font-weight: 700; }
.loan-head + .text { margin-top: 2px; }
.terms { display: grid; grid-template-columns: repeat(3, 1fr); gap: 6px; margin-top: 18px; }
.terms button { height: 36px; border-radius: 12px; background: #fff; font-size: 13px; }
.terms .on { background: #141414; color: #fff; font-weight: 500; }
.bars { display: grid; grid-template-columns: 65fr 53fr 53fr 53fr 54fr; gap: 4px; margin: 16px 0 6px; }
.bars i { height: 4px; border-radius: 2px; background: #d4d4d4; }
.bars .paid { background: #04e061; }
.plan { display: grid; grid-template-columns: 65px 1fr; gap: 4px; font-size: 13px; line-height: 18px; white-space: nowrap; }
.loan-buy { width: 100%; height: 44px; border-radius: 12px; background: #141414; color: #fff; font-weight: 500; margin-top: 15px; }
.seller { display: flex; justify-content: space-between; align-items: flex-start; padding-left: 6px; margin-top: 17px; }
.seller h3 { font-size: 21px; line-height: 26px; width: 230px; }
.seller + .text { margin-top: 2px; }
.logo { width: 78px; height: 52px; border-radius: 16px; background: #f0f0f0; display: flex; align-items: center; justify-content: center; }
.badge { display: inline-block; margin: 11px 0 0 4px; padding: 0 5px; border-radius: 4px; background: #c9ebff; font-size: 13px; line-height: 20px; }
h4 { font-size: 18px; line-height: 24px; margin: 15px 0 0 6px; }
.contact { display: grid; grid-template-columns: 221fr 107fr; gap: 6px; margin: 19px 0 6px; }
.contact button { height: 52px; border-radius: 16px; }
.call { width: 100%; height: 68px; border-radius: 16px; font-size: 18px; }
.scrollbar { width: 14px; background: #f1f1f1; display: flex; flex-direction: column; align-items: center; justify-content: space-between; padding: 4px 0; position: relative; }
.thumb { position: absolute; top: 43%; height: 29%; width: 6px; border-radius: 3px; background: #b9bcbf; }
.messages { position: absolute; right: 69px; bottom: 0; width: 250px; height: 40px; padding: 0 24px 0 16px; background: #fff; border-radius: 4px 4px 0 0; box-shadow: 0 0 16px rgba(0, 0, 0, .12); font-size: 18px; font-weight: 600; justify-content: flex-start; gap: 6px; }
.messages em { font-style: normal; font-size: 12px; line-height: 16px; color: #fff; background: #ff4053; border-radius: 8px; padding: 0 3px; }
.messages svg { margin-left: auto; }

.taskbar { height: 40px; flex: none; display: flex; background: linear-gradient(90deg, #cee6ee, #d0e6ee 40%, #d3dcea 85%); font-family: "Noto Sans", sans-serif; }
.start { width: 48px; }
.search { width: 288px; background: #fff; border: 1px solid #ccc; display: flex; align-items: center; padding: 0 8px 0 11px; gap: 11px; }
.search input { flex: 1; min-width: 0; border: 0; padding: 0; outline: 0; font: 15px "Open Sans", sans-serif; color: #333; background: none; }
.tasks { display: flex; gap: 1px; margin-left: 2px; }
.tasks button { width: 48px; height: 40px; position: relative; }
.tasks .open::after { content: ""; position: absolute; left: 4px; right: 4px; bottom: 0; height: 2px; background: #0078d7; }
.tasks .current { background: #f4f8fb; }
.tasks .current::after { left: 0; right: 0; }
.tray { margin-left: auto; display: flex; align-items: center; gap: 14px; font-size: 12px; margin-right: 4px; padding-right: 12px; border-right: 1px solid #a5adb8; }
.tray time { text-align: center; font-size: 11px; line-height: 18px; }
.note { margin: 6px 0 0 2px; }
```
